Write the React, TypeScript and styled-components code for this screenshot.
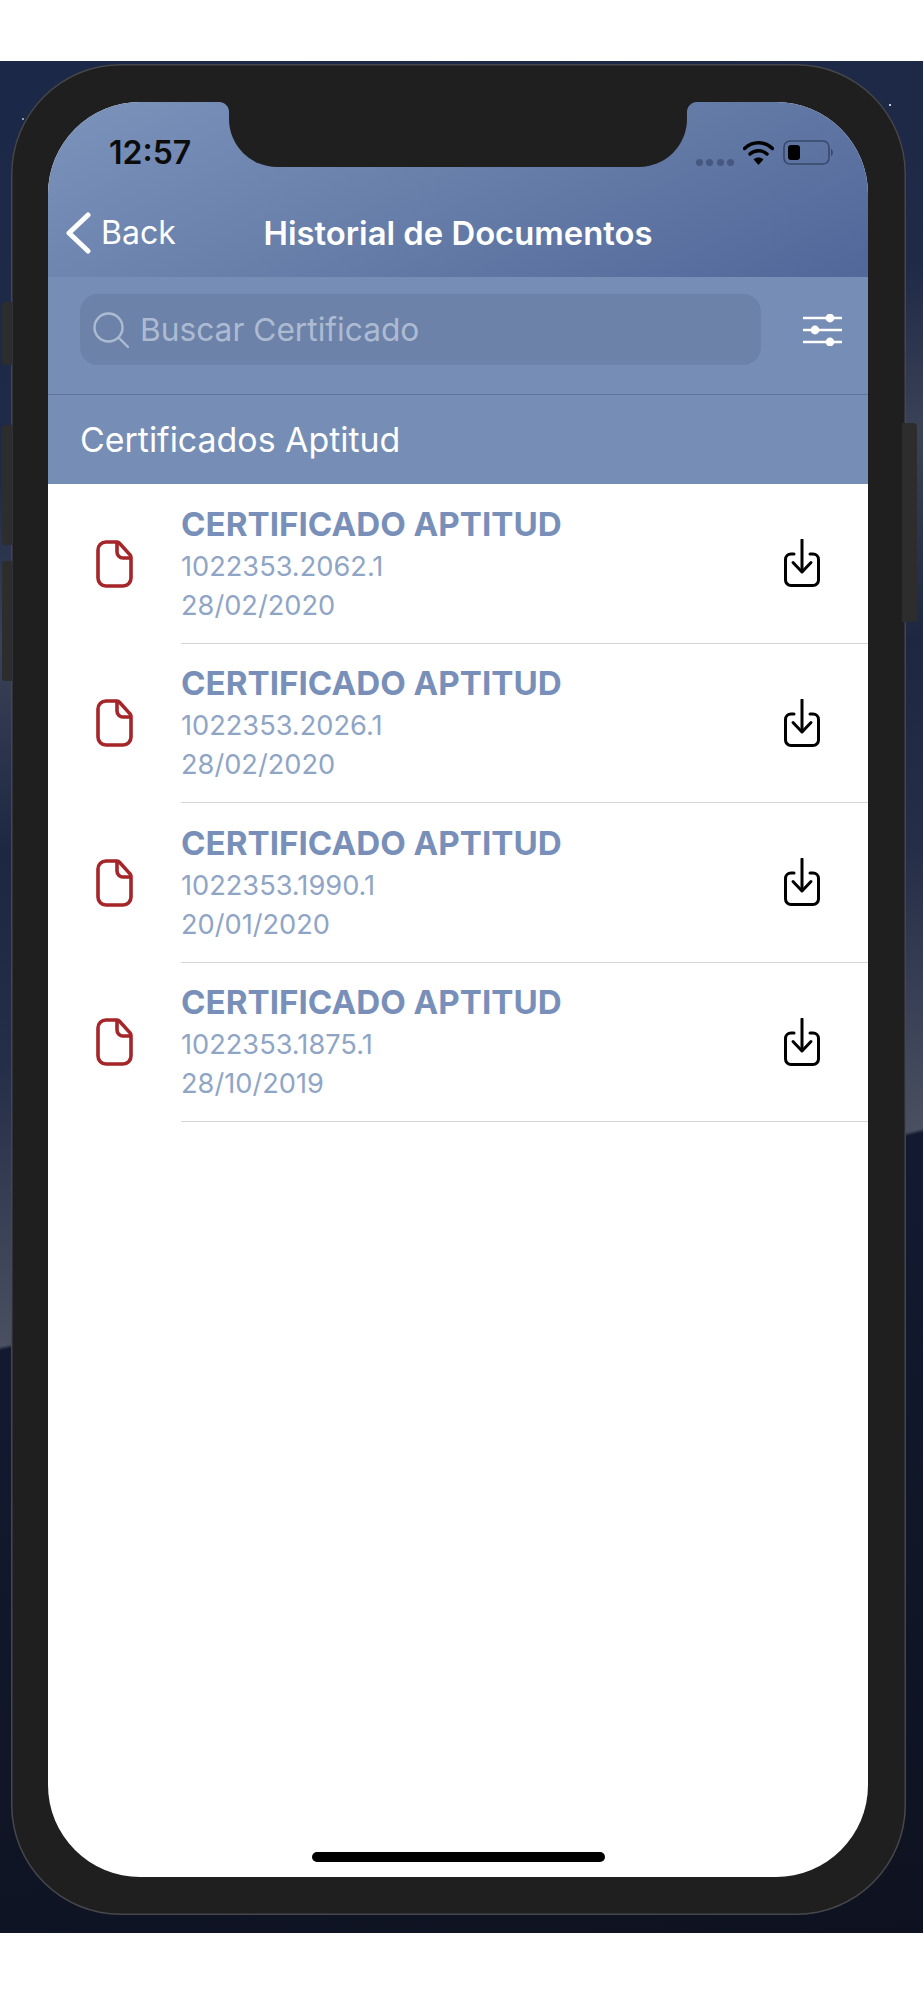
import React, { FC } from 'react';
import styled, { createGlobalStyle } from 'styled-components';

const GlobalStyle = createGlobalStyle`
  html, body {
    margin: 0;
    padding: 0;
    background: #fff;
    font-family: Inter, "Liberation Sans", sans-serif;
  }
`;

const Page = styled.div`
  width: 924px;
  height: 2000px;
  padding-top: 61px;
  box-sizing: border-box;
  background: #fff;
`;

const Wallpaper = styled.div`
  width: 923px;
  height: 1872px;
  padding: 3px 0 0 11px;
  box-sizing: border-box;
  background:
    radial-gradient(circle at 890px 44px, #c5cdd8 0 1px, transparent 1.5px),
    radial-gradient(circle at 865px 82px, #aab4c4 0 1px, transparent 1.5px),
    radial-gradient(circle at 899px 113px, #aab4c4 0 1px, transparent 1.5px),
    radial-gradient(circle at 23px 58px, #8f9bb0 0 1px, transparent 1.5px),
    linear-gradient(166.7deg, #1b2847 0%, #1f2a47 20%, #3a4256 28%, #1d2742 38%, #252e48 48%, #4a5061 61.5%, #131a30 61.7%, #0e1220 100%);
`;

const Phone = styled.div`
  position: relative;
  width: 895px;
  height: 1851px;
  padding: 38px 38px 38px 37px;
  box-sizing: border-box;
  background: #1f1f1f;
  border-radius: 110px;
  box-shadow: inset 0 0 0 1.5px #45474c;
`;

const SideButton = styled.div<{ $side: 'left' | 'right'; $top: number; $height: number }>`
  position: absolute;
  top: ${({ $top }) => $top}px;
  ${({ $side }) => $side}: ${({ $side }) => ($side === 'left' ? -9 : -11)}px;
  width: ${({ $side }) => ($side === 'left' ? 10 : 15)}px;
  height: ${({ $height }) => $height}px;
  background: #2d2d2d;
  border-radius: ${({ $side }) => ($side === 'left' ? '3px 0 0 3px' : '0 4px 4px 0')};
`;

const Screen = styled.div`
  position: relative;
  display: flex;
  flex-direction: column;
  height: 100%;
  background: #fff;
  border-radius: 92px;
  overflow: hidden;
`;

const Notch = styled.div`
  position: absolute;
  top: 0;
  left: 181px;
  width: 458px;
  height: 65px;
  background: #1f1f1f;
  border-radius: 0 0 48px 48px;

  &::before,
  &::after {
    content: '';
    position: absolute;
    top: 0;
    width: 10px;
    height: 10px;
  }

  &::before {
    left: -10px;
    background: radial-gradient(circle at 0 100%, transparent 9.5px, #1f1f1f 10.5px);
  }

  &::after {
    right: -10px;
    background: radial-gradient(circle at 100% 100%, transparent 9.5px, #1f1f1f 10.5px);
  }
`;

const Header = styled.header`
  display: flex;
  flex-direction: column;
  height: 175px;
  box-sizing: border-box;
  background: linear-gradient(155deg, #7c94bc 0%, #6880aa 45%, #52679a 100%);
`;

const StatusBar = styled.div`
  display: flex;
  align-items: center;
  justify-content: space-between;
  height: 98px;
  padding: 2px 33px 0 61px;
  box-sizing: border-box;
`;

const Clock = styled.span`
  font-size: 32px;
  font-weight: 600;
  color: #0c0c0c;
`;

const StatusIcons = styled.div`
  display: flex;
  align-items: center;
  gap: 9px;
`;

const SignalDots = styled.div`
  display: flex;
  gap: 3.5px;
  margin-top: 20px;
`;

const SignalDot = styled.span`
  width: 7px;
  height: 7px;
  border-radius: 50%;
  background: #46587f;
`;

const NavBar = styled.nav`
  display: grid;
  grid-template-columns: 1fr auto 1fr;
  align-items: center;
  height: 77px;
  padding: 0 17px 12px;
  box-sizing: border-box;
`;

const BackLink = styled.a`
  display: flex;
  align-items: center;
  gap: 10px;
  font-size: 32px;
  color: #fff;
`;

const NavTitle = styled.h1`
  margin: 0;
  font-size: 32.8px;
  font-weight: 600;
  color: #fff;
`;

const SearchBand = styled.div`
  display: flex;
  align-items: center;
  height: 118px;
  padding: 0 26px 12px 32px;
  box-sizing: border-box;
  background: #768db5;
  border-bottom: 1px solid #5f7498;
`;

const SearchBox = styled.div`
  display: flex;
  align-items: center;
  gap: 11px;
  flex: 1;
  height: 71px;
  padding: 0 13px;
  box-sizing: border-box;
  background: #6c82a9;
  border-radius: 18px;
`;

const Placeholder = styled.span`
  font-size: 31.7px;
  color: #adbbd2;
`;

const FilterButton = styled.button`
  display: flex;
  margin-left: 42px;
  padding: 0;
  background: none;
  border: 0;
`;

const SectionTitle = styled.h2`
  display: flex;
  align-items: center;
  height: 89px;
  margin: 0;
  padding: 0 0 0 32px;
  box-sizing: border-box;
  font-size: 33.9px;
  font-weight: 400;
  color: #fff;
  background: #768db5;
`;

const List = styled.ul`
  flex: 1;
  margin: 0;
  padding: 0;
  list-style: none;
`;

const Row = styled.li`
  display: flex;
  height: 159.5px;
`;

const RowIcon = styled.div`
  display: flex;
  align-items: center;
  width: 133px;
  padding-left: 48px;
  box-sizing: border-box;
`;

const RowBody = styled.div`
  display: flex;
  align-items: center;
  flex: 1;
  padding: 0 48px 0 0;
  border-bottom: 1.5px solid #d6d6d6;
`;

const RowText = styled.div`
  display: flex;
  flex-direction: column;
  flex: 1;
  margin-top: 2px;
`;

const RowTitle = styled.span`
  margin-bottom: 3px;
  font-size: 33.2px;
  line-height: 40px;
  font-weight: 700;
  color: #7890b9;
`;

const RowMeta = styled.span`
  font-size: 27.2px;
  line-height: 39px;
  color: #8fa5c6;
`;

const DownloadButton = styled.button`
  display: flex;
  padding: 0;
  background: none;
  border: 0;
`;

const HomeArea = styled.div`
  display: flex;
  justify-content: center;
  padding-bottom: 15px;
`;

const HomeBar = styled.div`
  width: 293px;
  height: 10px;
  background: #000;
  border-radius: 5px;
`;

// Icons
const WifiIcon: FC = () => (
  <svg width='31' height='25' viewBox='0 0 31 25' fill='none'>
    <path d='M1.5 8.5C9.5 0.8 21.5 0.8 29.5 8.5' stroke='#000' strokeWidth='3.4' strokeLinecap='round' />
    <path d='M7 14C11.8 9.6 19.2 9.6 24 14' stroke='#000' strokeWidth='3.4' strokeLinecap='round' />
    <path d='M15.5 25L10.6 19.4C13.4 17 17.6 17 20.4 19.4L15.5 25Z' fill='#000' />
  </svg>
);

const BatteryIcon: FC = () => (
  <svg width='52' height='25' viewBox='0 0 52 25' fill='none'>
    <rect x='1' y='1' width='45' height='23' rx='6' stroke='#39486a' strokeWidth='1.6' />
    <rect x='5' y='5' width='12' height='15' rx='3' fill='#000' />
    <path d='M48 9C50.5 10 50.5 15 48 16Z' fill='#39486a' />
  </svg>
);

const BackChevron: FC = () => (
  <svg width='26' height='42' viewBox='0 0 26 42' fill='none'>
    <path d='M23 3L4 21L23 39' stroke='#fff' strokeWidth='5' strokeLinecap='round' strokeLinejoin='round' />
  </svg>
);

const SearchIcon: FC = () => (
  <svg width='36' height='36' viewBox='0 0 36 36' fill='none'>
    <circle cx='15.5' cy='15.5' r='14' stroke='#adbbd2' strokeWidth='2.4' />
    <path d='M25.5 25.5L35 35' stroke='#adbbd2' strokeWidth='2.4' strokeLinecap='round' />
  </svg>
);

const FilterIcon: FC = () => (
  <svg width='39' height='32' viewBox='0 0 39 32' fill='none'>
    <path d='M0 4H39M0 16H39M0 28H39' stroke='#fff' strokeWidth='2.6' />
    <circle cx='27' cy='4' r='4.4' fill='#fff' />
    <circle cx='12' cy='16' r='4.4' fill='#fff' />
    <circle cx='27' cy='28' r='4.4' fill='#fff' />
  </svg>
);

const FileIcon: FC = () => (
  <svg width='37' height='48' viewBox='0 0 37 48' fill='none'>
    <path
      d='M21 2H10A8 8 0 0 0 2 10V38A8 8 0 0 0 10 46H27A8 8 0 0 0 35 38V17.5A4 4 0 0 0 33.8 14.6L23.5 3.2A4 4 0 0 0 21 2Z'
      stroke='#a52529'
      strokeWidth='3.6'
      strokeLinejoin='round'
    />
    <path d='M21 3V12A6 6 0 0 0 27 18H34.5' stroke='#a52529' strokeWidth='3.6' />
  </svg>
);

const DownloadIcon: FC = () => (
  <svg width='36' height='48' viewBox='0 0 36 48' fill='none'>
    <path d='M18 1V32' stroke='#000' strokeWidth='3' strokeLinecap='round' />
    <path d='M9 23.5L18 33L27 23.5' stroke='#000' strokeWidth='3' strokeLinecap='round' strokeLinejoin='round' />
    <path
      d='M10 15H7A5.5 5.5 0 0 0 1.5 20.5V41A5.5 5.5 0 0 0 7 46.5H29A5.5 5.5 0 0 0 34.5 41V20.5A5.5 5.5 0 0 0 29 15H26'
      stroke='#000'
      strokeWidth='3'
      strokeLinecap='round'
    />
  </svg>
);

const certificates = [
  { code: '1022353.2062.1', date: '28/02/2020' },
  { code: '1022353.2026.1', date: '28/02/2020' },
  { code: '1022353.1990.1', date: '20/01/2020' },
  { code: '1022353.1875.1', date: '28/10/2019' }
];

const App: FC = () => (
  <Page>
    <GlobalStyle />
    <Wallpaper>
      <Phone>
        <SideButton $side='left' $top={238} $height={63} />
        <SideButton $side='left' $top={361} $height={120} />
        <SideButton $side='left' $top={497} $height={120} />
        <SideButton $side='right' $top={359} $height={199} />
        <Screen>
          <Notch />
          <Header>
            <StatusBar>
              <Clock>12:57</Clock>
              <StatusIcons>
                <SignalDots>
                  <SignalDot />
                  <SignalDot />
                  <SignalDot />
                  <SignalDot />
                </SignalDots>
                <WifiIcon />
                <BatteryIcon />
              </StatusIcons>
            </StatusBar>
            <NavBar>
              <BackLink>
                <BackChevron />
                Back
              </BackLink>
              <NavTitle>Historial de Documentos</NavTitle>
            </NavBar>
          </Header>
          <SearchBand>
            <SearchBox>
              <SearchIcon />
              <Placeholder>Buscar Certificado</Placeholder>
            </SearchBox>
            <FilterButton>
              <FilterIcon />
            </FilterButton>
          </SearchBand>
          <SectionTitle>Certificados Aptitud</SectionTitle>
          <List>
            {certificates.map(item => (
              <Row key={item.code}>
                <RowIcon>
                  <FileIcon />
                </RowIcon>
                <RowBody>
                  <RowText>
                    <RowTitle>CERTIFICADO APTITUD</RowTitle>
                    <RowMeta>{item.code}</RowMeta>
                    <RowMeta>{item.date}</RowMeta>
                  </RowText>
                  <DownloadButton>
                    <DownloadIcon />
                  </DownloadButton>
                </RowBody>
              </Row>
            ))}
          </List>
          <HomeArea>
            <HomeBar />
          </HomeArea>
        </Screen>
      </Phone>
    </Wallpaper>
  </Page>
);

export default App;
